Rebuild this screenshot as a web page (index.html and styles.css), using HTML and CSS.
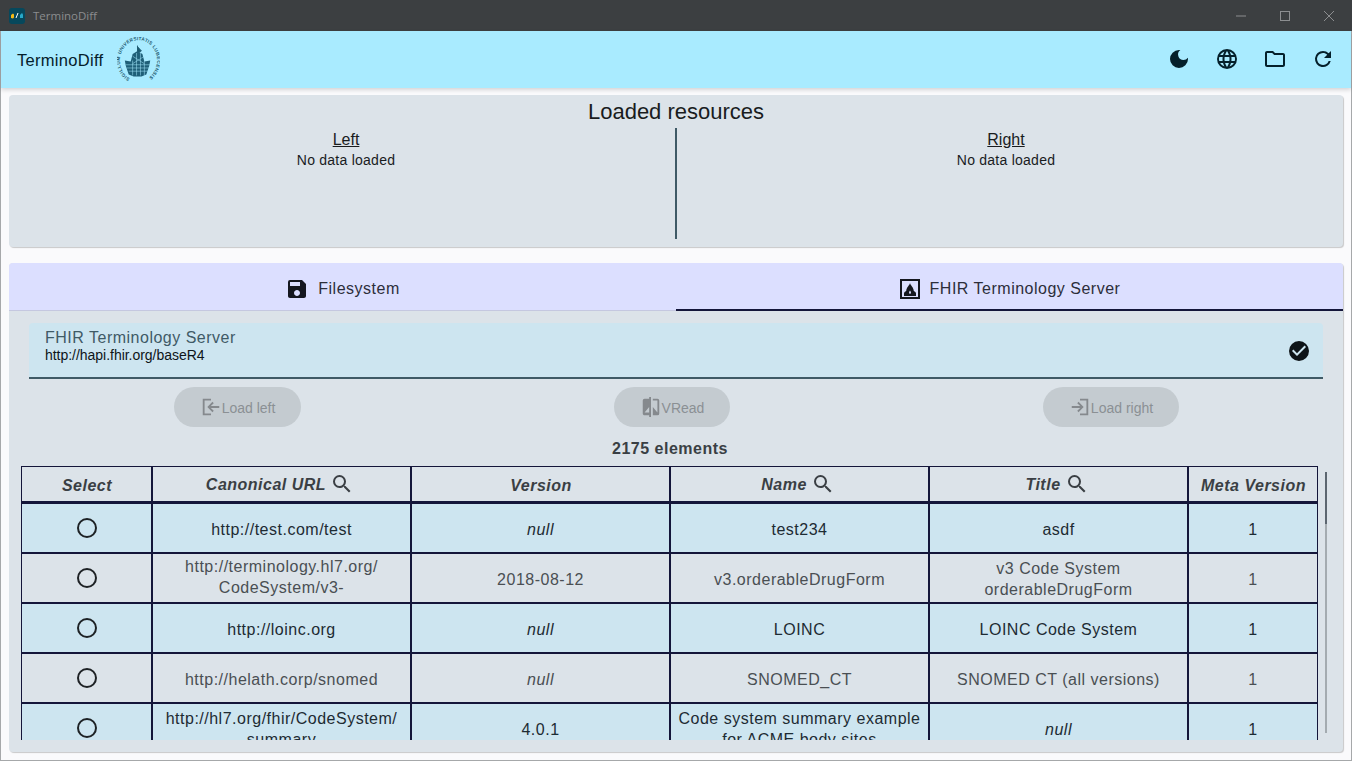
FILE: index.html
```html
<!DOCTYPE html>
<html lang="en">
<head>
    <meta charset="UTF-8">
    <title>TerminoDiff</title>
    <link rel="stylesheet" href="styles.css">
</head>
<body>
<div class="window">
    <div class="titlebar">
        <svg class="app-icon" viewBox="0 0 16 16">
            <rect width="16" height="16" rx="3" fill="#06485c"/>
            <path d="M2 7l2-1.500 1 1v3l-1 1-2-.5z" fill="#f5b914"/>
            <path d="M7 10l2-5" stroke="#fff" stroke-width="1"/>
            <path d="M11 7l2-2 1 1.500v3.500h-3z" fill="#27a9c9"/>
        </svg>
        <span class="window-title">TerminoDiff</span>
        <div class="window-controls">
            <svg viewBox="0 0 12 12"><path d="M1 6h10" stroke="#8c8e90"/></svg>
            <svg viewBox="0 0 12 12"><rect x="1.500" y="1.500" width="9" height="9" fill="none" stroke="#8c8e90"/></svg>
            <svg viewBox="0 0 12 12"><path d="M1 1l10 10M11 1L1 11" stroke="#8c8e90"/></svg>
        </div>
    </div>

    <header class="appbar">
        <span class="app-name">TerminoDiff</span>
        <svg class="seal" viewBox="0 0 44 44" preserveAspectRatio="none">
            <defs><path id="sealring" d="M22 22m-19 0a19 19 0 1 1 38 0a19 19 0 1 1-38 0"/></defs>
            <text class="seal-text" transform="rotate(-62 22 22)"><textPath href="#sealring" textLength="98">SIGILLUM UNIVERSITATIS LUBECENSIS</textPath></text>
            <path d="M21 8v7M21 9l4 4-4 2z" stroke="#1c5a70" fill="#1c5a70" stroke-width=".8"/>
            <path d="M16 16l5-3 5 3 2 7 6-1-1 5-3 8-5 2h-8l-5-2-3-8-1-5 6 1z" fill="#1f5f78"/>
            <path d="M9 26h26M10 29h24M12 32h20M16 18l12 7M28 18l-12 7M16 22v14M20 15v21M24 15v21M28 22v14" stroke="#a9ebff" stroke-width=".5"/>
        </svg>
        <div class="appbar-actions">
            <svg viewBox="0 0 24 24"><path d="M12 3a9 9 0 1 0 9 9c0-.46-.04-.92-.1-1.360a5.390 5.390 0 0 1-4.400 2.260 5.400 5.400 0 0 1-3.140-9.800c-.44-.06-.9-.1-1.360-.1z"/></svg>
            <svg viewBox="0 0 24 24"><path d="M12 2a10 10 0 1 0 0 20 10 10 0 0 0 0-20zm6.930 6h-2.950a15.650 15.650 0 0 0-1.380-3.560A8.030 8.030 0 0 1 18.930 8zM12 4.040c.83 1.200 1.480 2.530 1.910 3.960h-3.820c.43-1.430 1.080-2.760 1.910-3.960zM4.260 14C4.100 13.360 4 12.690 4 12s.1-1.360.26-2h3.380c-.08.660-.14 1.320-.14 2s.06 1.340.14 2H4.260zm.82 2h2.950c.32 1.250.78 2.450 1.380 3.560A7.990 7.990 0 0 1 5.080 16zm2.950-8H5.080a7.990 7.990 0 0 1 4.330-3.560A15.650 15.650 0 0 0 8.030 8zM12 19.960c-.83-1.200-1.480-2.530-1.910-3.960h3.820c-.43 1.430-1.080 2.760-1.910 3.960zM14.340 14H9.660c-.09-.660-.16-1.320-.16-2s.07-1.350.16-2h4.680c.09.650.16 1.320.16 2s-.07 1.340-.16 2zm.25 5.560c.6-1.110 1.060-2.310 1.380-3.560h2.950a8.030 8.030 0 0 1-4.330 3.560zM16.360 14c.08-.660.14-1.320.14-2s-.06-1.340-.14-2h3.380c.16.640.26 1.310.26 2s-.1 1.360-.26 2h-3.380z"/></svg>
            <svg viewBox="0 0 24 24"><path d="M9.170 6l2 2H20v10H4V6h5.170M10 4H4c-1.100 0-1.990.9-1.990 2L2 18c0 1.100.9 2 2 2h16c1.100 0 2-.9 2-2V8c0-1.100-.9-2-2-2h-8l-2-2z"/></svg>
            <svg viewBox="0 0 24 24"><path d="M17.650 6.350A7.960 7.960 0 0 0 12 4a8 8 0 1 0 7.730 10h-2.080A6 6 0 1 1 12 6c1.660 0 3.140.69 4.220 1.780L13 11h7V4l-2.350 2.350z"/></svg>
        </div>
    </header>

    <main class="content">
        <section class="card loaded">
            <h1>Loaded resources</h1>
            <div class="loaded-sides">
                <div class="side side-left">
                    <span class="side-title">Left</span>
                    <span class="side-value">No data loaded</span>
                </div>
                <div class="side side-right">
                    <span class="side-title">Right</span>
                    <span class="side-value">No data loaded</span>
                </div>
            </div>
        </section>

        <section class="card source">
            <div class="tabs">
                <div class="tab">
                    <svg viewBox="0 0 24 24"><path d="M17 3H5a2 2 0 0 0-2 2v14c0 1.100.89 2 2 2h14c1.100 0 2-.9 2-2V7l-4-4zm-5 16c-1.660 0-3-1.340-3-3s1.340-3 3-3 3 1.340 3 3-1.340 3-3 3zm3-10H5V5h10v4z"/></svg>
                    <span>Filesystem</span>
                </div>
                <div class="tab tab-active">
                    <svg viewBox="0 0 20 20">
                        <path fill-rule="evenodd" d="M0 0h20v20H0zM2 2v16h16V2z"/>
                        <path d="M10 4c.5 2.500 3.500 4 3.800 8 1.200.5 2.200 1.300 2.200 2.500V17H4v-2.500c0-1.200 1-2 2.200-2.500C6.500 8 9.500 6.500 10 4z"/>
                        <path class="flame" d="M10 11.500c-.5.8-1 1.400-1 2.200 0 .7.500 1.100 1 1.100s1-.4 1-1.100c0-.8-.5-1.400-1-2.200z"/>
                    </svg>
                    <span>FHIR Terminology Server</span>
                </div>
            </div>

            <div class="server-field">
                <div class="server-text">
                    <span class="server-label">FHIR Terminology Server</span>
                    <span class="server-url">http://hapi.fhir.org/baseR4</span>
                </div>
                <svg viewBox="0 0 24 24"><path d="M12 2a10 10 0 1 0 0 20 10 10 0 0 0 0-20zm-2 15l-5-5 1.410-1.410L10 14.170l7.590-7.590L19 8l-9 9z"/></svg>
            </div>

            <div class="actions">
                <button class="btn btn-left" disabled>
                    <svg viewBox="0 0 24 24"><path d="M12 3H3v18h9v-2H5V5h7zM21 11H11.800l3.200-3.200L13.600 6.400 8 12l5.600 5.600 1.400-1.400-3.200-3.200H21z"/></svg>
                    Load left
                </button>
                <button class="btn btn-read" disabled>
                    <svg viewBox="0 0 24 24"><path d="M10 3H5a2 2 0 0 0-2 2v14c0 1.100.9 2 2 2h5v2h2V1h-2v2zm0 15H5l5-6v6zm9-15h-5v2h5v13l-5-6v9h5a2 2 0 0 0 2-2V5a2 2 0 0 0-2-2z"/></svg>
                    VRead
                </button>
                <button class="btn btn-right" disabled>
                    <svg viewBox="0 0 24 24"><path d="M12 3h9v18h-9v-2h7V5h-7zM3 11h9.200L9 7.800l1.400-1.400L16 12l-5.600 5.600L9 16.200l3.200-3.200H3z"/></svg>
                    Load right
                </button>
            </div>

            <div class="count">2175 elements</div>

            <div class="table-wrap">
                <div class="table-clip">
                    <table>
                        <colgroup>
                            <col class="col-select"><col class="col-wide"><col class="col-wide"><col class="col-wide"><col class="col-wide"><col class="col-meta">
                        </colgroup>
                        <thead>
                            <tr>
                                <th>Select</th>
                                <th>Canonical URL<svg viewBox="0 0 24 24"><path d="M15.500 14h-.79l-.28-.27A6.470 6.470 0 0 0 16 9.500 6.500 6.500 0 1 0 9.500 16c1.610 0 3.090-.59 4.230-1.570l.27.28v.79l5 4.990L20.490 19l-4.990-5zm-6 0C7.010 14 5 11.990 5 9.500S7.010 5 9.500 5 14 7.010 14 9.500 11.990 14 9.500 14z"/></svg></th>
                                <th>Version</th>
                                <th>Name<svg viewBox="0 0 24 24"><path d="M15.500 14h-.79l-.28-.27A6.470 6.470 0 0 0 16 9.500 6.500 6.500 0 1 0 9.500 16c1.610 0 3.090-.59 4.230-1.570l.27.28v.79l5 4.990L20.490 19l-4.990-5zm-6 0C7.010 14 5 11.990 5 9.500S7.010 5 9.500 5 14 7.010 14 9.500 11.990 14 9.500 14z"/></svg></th>
                                <th>Title<svg viewBox="0 0 24 24"><path d="M15.500 14h-.79l-.28-.27A6.470 6.470 0 0 0 16 9.500 6.500 6.500 0 1 0 9.500 16c1.610 0 3.090-.59 4.230-1.570l.27.28v.79l5 4.990L20.490 19l-4.990-5zm-6 0C7.010 14 5 11.990 5 9.500S7.010 5 9.500 5 14 7.010 14 9.500 11.990 14 9.500 14z"/></svg></th>
                                <th>Meta Version</th>
                            </tr>
                        </thead>
                        <tbody>
                            <tr class="odd">
                                <td><span class="radio"></span></td>
                                <td>http://test.com/test</td>
                                <td class="null">null</td>
                                <td>test234</td>
                                <td>asdf</td>
                                <td>1</td>
                            </tr>
                            <tr class="even">
                                <td><span class="radio"></span></td>
                                <td><div class="url-lines">http://terminology.hl7.org/<br>CodeSystem/v3-</div></td>
                                <td>2018-08-12</td>
                                <td>v3.orderableDrugForm</td>
                                <td>v3 Code System<br>orderableDrugForm</td>
                                <td>1</td>
                            </tr>
                            <tr class="odd">
                                <td><span class="radio"></span></td>
                                <td>http://loinc.org</td>
                                <td class="null">null</td>
                                <td>LOINC</td>
                                <td>LOINC Code System</td>
                                <td>1</td>
                            </tr>
                            <tr class="even">
                                <td><span class="radio"></span></td>
                                <td>http://helath.corp/snomed</td>
                                <td class="null">null</td>
                                <td>SNOMED_CT</td>
                                <td>SNOMED CT (all versions)</td>
                                <td>1</td>
                            </tr>
                            <tr class="odd">
                                <td><span class="radio"></span></td>
                                <td>http://hl7.org/fhir/CodeSystem/<br>summary</td>
                                <td>4.0.1</td>
                                <td>Code system summary example<br>for ACME body sites</td>
                                <td class="null">null</td>
                                <td>1</td>
                            </tr>
                        </tbody>
                    </table>
                </div>
                <div class="scrollbar"><div class="scroll-thumb"></div></div>
            </div>
        </section>
    </main>
</div>
</body>
</html>
```

FILE: styles.css
```css
html, body {
    margin: 0;
    padding: 0;
    height: 100%;
    overflow: hidden;
    font-family: 'Liberation Sans', Arial, sans-serif;
}
.window {
    box-sizing: border-box;
    height: 761px;
    display: flex;
    flex-direction: column;
    background: #fafafc;
    border: 1px solid #a6a8aa;
    border-top: none;
}
.titlebar {
    height: 31px;
    flex: none;
    margin: 0 -1px;
    display: flex;
    align-items: center;
    background: #3c3f41;
    padding-left: 9px;
}
.app-icon {
    width: 16px;
    height: 16px;
}
.window-title {
    margin-left: 8px;
    font-family: 'Open Sans', sans-serif;
    font-size: 11.500px;
    color: #8b8d8f;
}
.window-controls {
    margin-left: auto;
    display: flex;
    gap: 32px;
    padding-right: 17px;
}
.window-controls svg {
    width: 12px;
    height: 12px;
}
.appbar {
    height: 57px;
    flex: none;
    display: flex;
    align-items: center;
    background: #a9ebff;
    box-shadow: 0 2px 4px rgba(0, 0, 0, 0.15);
    padding-left: 16px;
    color: #05202b;
}
.app-name {
    font-size: 16.500px;
    letter-spacing: 0.3px;
    padding-top: 2px;
}
.seal {
    width: 43px;
    height: 47px;
    margin-left: 14px;
    margin-top: 2px;
}
.seal-text {
    font-size: 4.600px;
    font-weight: bold;
    fill: #1c5a70;
}
.appbar-actions {
    margin-left: auto;
    display: flex;
    gap: 24px;
    padding: 0 16px 2px 0;
}
.appbar-actions svg {
    width: 24px;
    height: 24px;
    fill: #05202b;
}
.content {
    flex: 1;
    min-height: 0;
    display: flex;
    flex-direction: column;
    gap: 16px;
    padding: 7px 8px 8px 8px;
}
.card {
    background: #dce3e9;
    border-radius: 4px;
    box-shadow: 1px 1px 1px rgba(0, 0, 0, 0.2);
}
.loaded {
    height: 152px;
    flex: none;
    display: flex;
    flex-direction: column;
    color: #191c1e;
}
.loaded h1 {
    margin: 4px 0 0;
    height: 29px;
    line-height: 26px;
    font-size: 22px;
    font-weight: normal;
    text-align: center;
}
.loaded-sides {
    height: 111px;
    display: flex;
}
.side {
    flex: 1;
    display: flex;
    flex-direction: column;
    align-items: center;
    padding-top: 3px;
}
.side-left {
    padding-left: 8px;
}
.side-right {
    border-left: 2px solid #3f5a66;
    padding-right: 8px;
}
.side-title {
    font-size: 16px;
    line-height: 18px;
    text-decoration: underline;
}
.side-value {
    margin-top: 3px;
    font-size: 14px;
    line-height: 17px;
    letter-spacing: 0.25px;
}
.source {
    flex: 1;
    min-height: 0;
    display: flex;
    flex-direction: column;
}
.tabs {
    height: 48px;
    flex: none;
    display: flex;
    background: #dcdfff;
    border-radius: 4px 4px 0 0;
}
.tab {
    flex: 1;
    display: flex;
    align-items: center;
    justify-content: center;
    gap: 9px;
    box-sizing: border-box;
    padding-top: 5px;
    border-bottom: 1px solid #c5c8e0;
    font-size: 16px;
    letter-spacing: 0.5px;
    color: #2c2e3a;
}
.tab svg {
    width: 24px;
    height: 24px;
    fill: #15171f;
}
.tab-active {
    gap: 10px;
    padding-top: 6px;
    border-bottom: 2px solid #14163a;
}
.tab-active svg {
    width: 20px;
    height: 20px;
    margin-left: 1px;
}
.flame {
    fill: #dcdfff;
}
.server-field {
    height: 56px;
    flex: none;
    box-sizing: border-box;
    margin: 12px 20px 0;
    padding: 6px 12px 0 16px;
    display: flex;
    justify-content: space-between;
    background: #cde5f0;
    border-bottom: 2px solid #3f5a66;
    border-radius: 4px 4px 0 0;
}
.server-text {
    display: flex;
    flex-direction: column;
}
.server-label {
    font-size: 16px;
    line-height: 17px;
    letter-spacing: 0.5px;
    color: #3f5a66;
}
.server-url {
    font-size: 14px;
    line-height: 18px;
    letter-spacing: -0.03px;
    color: #0e1418;
}
.server-field svg {
    width: 24px;
    height: 24px;
    margin-top: 10px;
    fill: #0e1418;
}
.actions {
    height: 40px;
    flex: none;
    margin-top: 8px;
    display: grid;
    grid-template-columns: 440px 429px 1fr;
    padding-left: 165px;
}
.btn {
    height: 40px;
    display: flex;
    align-items: center;
    justify-content: center;
    border: none;
    border-radius: 20px;
    background: #c4cbd0;
    color: #8b9094;
    font-family: inherit;
    font-size: 14px;
    padding: 2px 0 0;
}
.btn svg {
    width: 22px;
    height: 22px;
    margin-top: -2px;
    fill: #85898d;
}
.btn-left {
    width: 127px;
}
.btn-read {
    width: 116px;
}
.btn-right {
    width: 136px;
}
.count {
    flex: none;
    margin-top: 13px;
    padding-right: 12px;
    height: 18px;
    line-height: 18px;
    text-align: center;
    font-size: 16px;
    font-weight: bold;
    letter-spacing: 0.5px;
    color: #3a3f44;
}
.table-wrap {
    position: relative;
    flex: none;
    height: 274px;
    margin: 8px 0 0 12px;
}
.table-clip {
    width: 1297px;
    height: 274px;
    overflow: hidden;
}
table {
    width: 1297px;
    margin: -1px 0 0 -1px;
    table-layout: fixed;
    border-collapse: collapse;
    font-size: 16px;
    letter-spacing: 0.5px;
    color: #2c3840;
    text-align: center;
}
.col-select {
    width: 131px;
}
.col-wide {
    width: 259px;
}
.col-meta {
    width: 130px;
}
th, td {
    padding: 0;
    border: 2px solid #14163a;
}
th {
    height: 30px;
    padding: 4px 0 0 1px;
    border-bottom-width: 3px;
    font-style: italic;
    font-weight: bold;
    color: #3a3f44;
}
th svg {
    width: 24px;
    height: 24px;
    margin: -4px 4px 0 4px;
    vertical-align: middle;
    fill: #3a3f44;
}
td {
    height: 46px;
    padding-top: 2px;
    line-height: 21px;
}
.odd td {
    background: #cde5f0;
    color: #1d2b33;
}
.even td {
    color: #4a4f53;
}
td.null {
    font-style: italic;
}
.url-lines {
    margin-bottom: 4px;
}
.radio {
    display: block;
    box-sizing: border-box;
    width: 20px;
    height: 20px;
    margin: -2px auto 0;
    border: 2px solid #1e2225;
    border-radius: 50%;
}
.scrollbar {
    position: absolute;
    left: 1304px;
    top: 6px;
    width: 2px;
    height: 261px;
    background: #a4abb0;
}
.scroll-thumb {
    height: 52px;
    background: #5c6670;
}
```
